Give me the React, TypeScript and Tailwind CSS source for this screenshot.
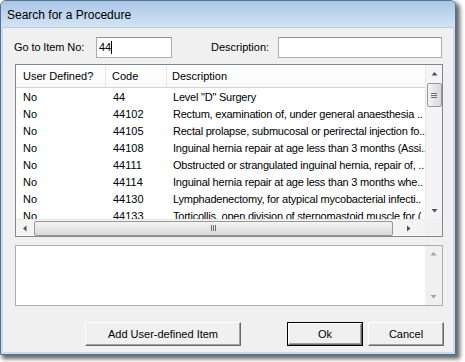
import React from "react";

const rows: [string, string, string][] = [
  ["No", "44", 'Level "D" Surgery'],
  ["No", "44102", "Rectum, examination of, under general anaesthesia .."],
  ["No", "44105", "Rectal prolapse, submucosal or perirectal injection fo.."],
  ["No", "44108", "Inguinal hernia repair at age less than 3 months (Assi.."],
  ["No", "44111", "Obstructed or strangulated inguinal hernia, repair of, .."],
  ["No", "44114", "Inguinal hernia repair at age less than 3 months whe.."],
  ["No", "44130", "Lymphadenectomy, for atypical mycobacterial infecti.."],
  ["No", "44133", "Torticollis, open division of sternomastoid muscle for ("],
];

function Arrow({ dir, color = "#505050" }: { dir: "up" | "down" | "left" | "right"; color?: string }) {
  const pts = {
    up: "0.5,4.5 3.5,1 6.5,4.5",
    down: "0.5,1 3.5,4.5 6.5,1",
    left: "4.5,0.5 1,3.5 4.5,6.5",
    right: "1,0.5 4.5,3.5 1,6.5",
  }[dir];
  const vertical = dir === "up" || dir === "down";
  return (
    <svg width={vertical ? 7 : 6} height={vertical ? 6 : 7} viewBox={vertical ? "0 0 7 6" : "0 0 6 7"}>
      <polygon points={pts} fill={color} />
    </svg>
  );
}

function Button({ label, width, isDefault }: { label: string; width: string; isDefault?: boolean }) {
  return (
    <div className={`${width} h-[24px] ${isDefault ? "border border-black" : ""}`}>
      <div className="h-full w-full border-t border-l border-white border-r border-b border-r-[#696969] border-b-[#696969] bg-[#f0f0f0] flex items-center justify-center shadow-[inset_-1px_-1px_0_#a0a0a0]">
        {label}
      </div>
    </div>
  );
}

export default function App() {
  return (
    <div
      className="w-[465px] h-[362px] bg-white text-[11px] text-black leading-none"
      style={{ fontFamily: '"Liberation Sans", Arial, sans-serif' }}
    >
      <div className="w-[456px] h-[355px] rounded-t-[6px] border border-[#56708d] bg-[#c8dbf0] shadow-[3px_3px_4px_1px_rgba(0,0,0,0.6)] flex flex-col overflow-hidden">
        <div className="h-[26px] shrink-0 bg-gradient-to-b from-[#a9c5e5] to-[#d4e4f5] pl-[6px] pt-[1px] flex items-center text-[12px]">
          Search for a Procedure
        </div>
        <div className="mx-[2px] mb-[2px] flex-1 bg-[#f0f0f0] border-t border-[#b6cbe2] pl-[12px] flex flex-col">
          {/* search row */}
          <div className="mt-[9px] h-[21px] flex items-center">
            <div className="w-[82px] -ml-px tracking-[-0.1px]">Go to Item No:</div>
            <div className="w-[76px] h-[21px] bg-white border border-[#abadb3] border-t-[#8f9092] flex items-center pl-[2px]">
              44<span className="inline-block w-px h-[13px] bg-black" />
            </div>
            <div className="ml-[39px] w-[67px]">Description:</div>
            <div className="w-[164px] h-[21px] bg-white border border-[#abadb3] border-t-[#8f9092]" />
          </div>

          {/* list */}
          <div className="mt-[6px] w-[428px] h-[173px] border border-[#828790] bg-white flex flex-col">
            <div className="h-[154px] flex">
              <div className="w-[409px] flex flex-col overflow-hidden">
                <div className="h-[23px] shrink-0 flex border-b border-[#d5d5d5] bg-gradient-to-b from-white to-[#fafafa] pt-[1px]">
                  <div className="w-[90px] pl-[7px] flex items-center border-r border-[#e5e5e5]">User Defined?</div>
                  <div className="w-[61px] pl-[6px] flex items-center border-r border-[#e5e5e5]">Code</div>
                  <div className="flex-1 pl-[5px] flex items-center">Description</div>
                </div>
                {rows.map((r) => (
                  <div key={r[1]} className="h-[17px] shrink-0 flex items-center pt-[1px]">
                    <div className="w-[90px] pl-[7px]">{r[0]}</div>
                    <div className="w-[61px] pl-[7px]">{r[1]}</div>
                    <div className="w-[258px] pl-[6px] whitespace-nowrap overflow-hidden tracking-[-0.22px]">{r[2]}</div>
                  </div>
                ))}
              </div>
              <div className="w-[17px] bg-[#f4f4f4] border-l border-[#e6e6e6] flex flex-col items-center">
                <div className="h-[17px] flex items-center justify-center pt-[1px]">
                  <Arrow dir="up" />
                </div>
                <div className="mt-[1px] w-[15px] h-[24px] rounded-[2px] border border-[#979797] bg-gradient-to-r from-[#f4f4f4] to-[#d9d9d9] flex flex-col items-center justify-center gap-[1px]">
                  <div className="w-[6px] h-px bg-[#6e6e6e]" />
                  <div className="w-[6px] h-px bg-[#6e6e6e]" />
                  <div className="w-[6px] h-px bg-[#6e6e6e]" />
                </div>
                <div className="flex-1" />
                <div className="h-[17px] flex items-center justify-center">
                  <Arrow dir="down" />
                </div>
              </div>
            </div>
            <div className="h-[17px] flex">
              <div className="w-[409px] bg-[#f4f4f4] border-t border-[#e6e6e6] flex items-center">
                <div className="w-[17px] flex items-center justify-center">
                  <Arrow dir="left" />
                </div>
                <div className="ml-px w-[359px] h-[15px] rounded-[2px] border border-[#979797] bg-gradient-to-b from-[#f4f4f4] to-[#d9d9d9] flex items-center justify-center gap-[1px]">
                  <div className="w-px h-[6px] bg-[#6e6e6e]" />
                  <div className="w-px h-[6px] bg-[#6e6e6e]" />
                  <div className="w-px h-[6px] bg-[#6e6e6e]" />
                </div>
                <div className="flex-1 flex items-center justify-center">
                  <Arrow dir="right" />
                </div>
              </div>
              <div className="w-[17px] bg-[#f0f0f0]" />
            </div>
          </div>

          {/* notes box */}
          <div className="mt-[8px] w-[428px] h-[61px] border border-[#abadb3] bg-white flex justify-end">
            <div className="w-[17px] bg-[#f0f0f0] flex flex-col items-center justify-between py-[5px]">
              <Arrow dir="up" color="#a3a3a3" />
              <Arrow dir="down" color="#a3a3a3" />
            </div>
          </div>

          {/* buttons */}
          <div className="mt-[16px] flex">
            <div className="ml-[70px]">
              <Button label="Add User-defined Item" width="w-[156px]" />
            </div>
            <div className="ml-[46px]">
              <Button label="Ok" width="w-[76px]" isDefault />
            </div>
            <div className="ml-[5px]">
              <Button label="Cancel" width="w-[76px]" />
            </div>
          </div>
        </div>
      </div>
    </div>
  );
}
